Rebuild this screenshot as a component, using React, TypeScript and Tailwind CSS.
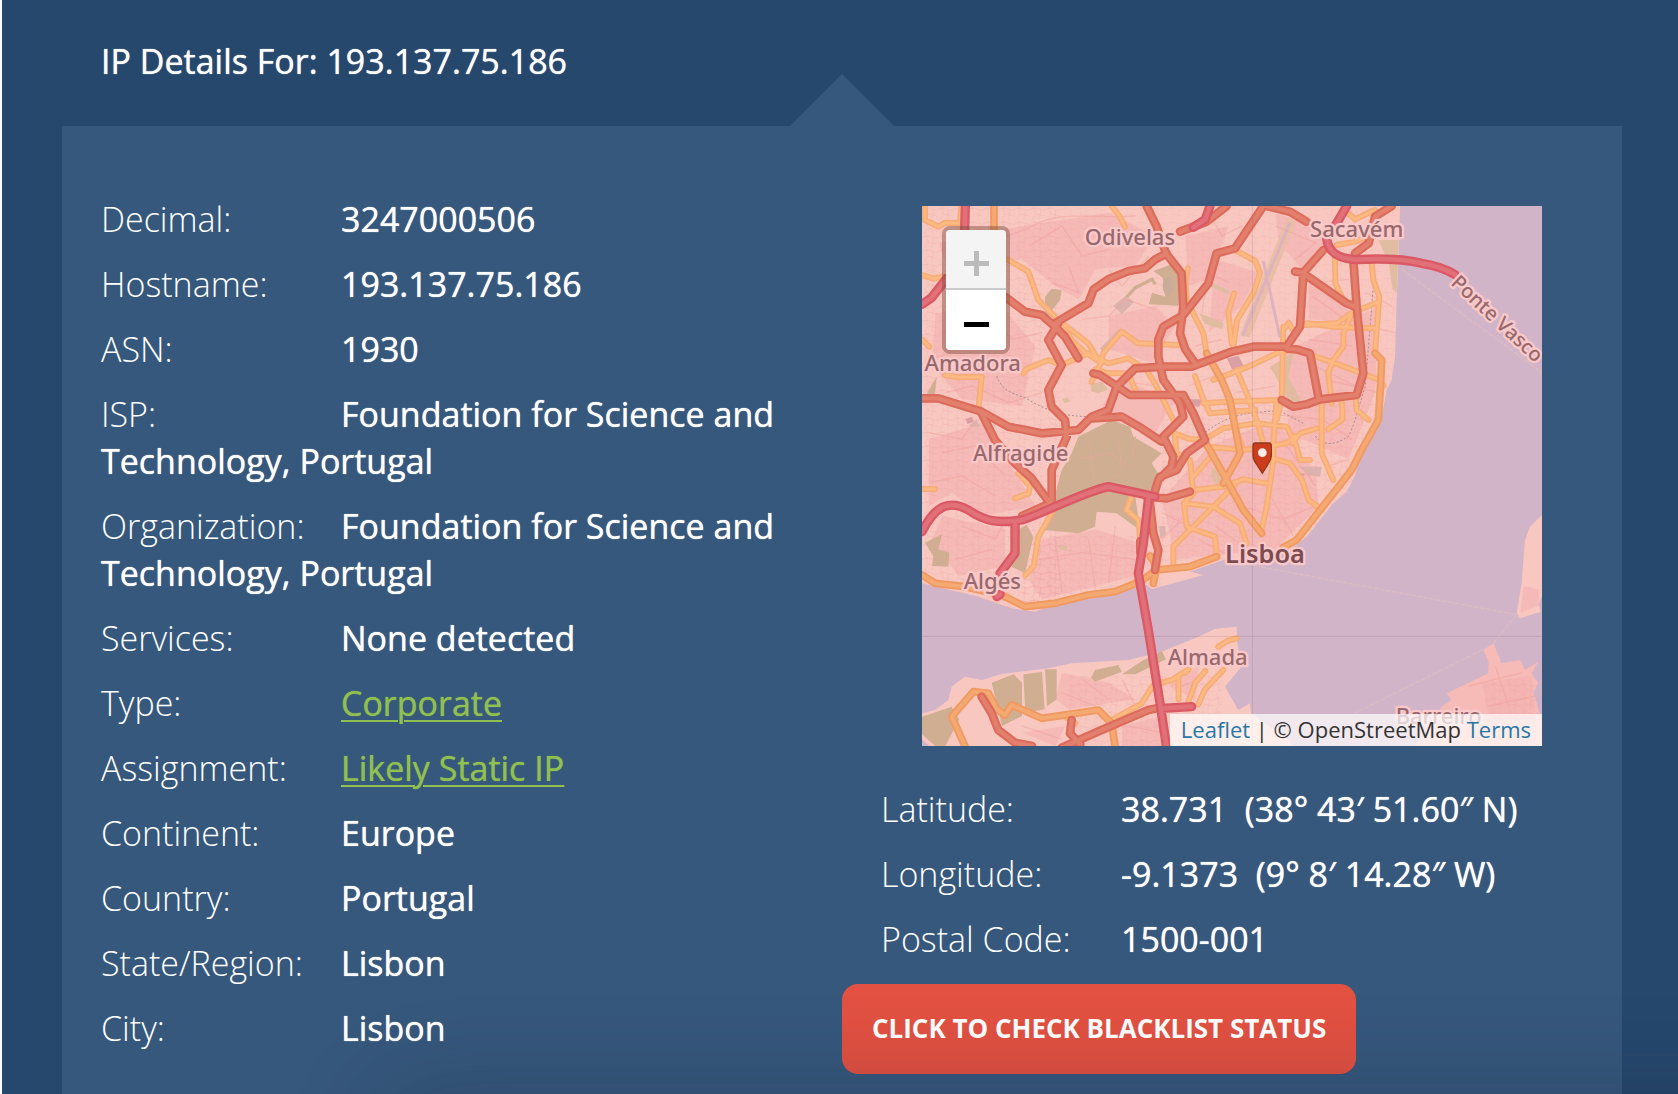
import React from "react";

type Detail = { label: string; value: string; href?: string };

const details: Detail[] = [
  { label: "Decimal:", value: "3247000506" },
  { label: "Hostname:", value: "193.137.75.186" },
  { label: "ASN:", value: "1930" },
  { label: "ISP:", value: "Foundation for Science and Technology, Portugal" },
  { label: "Organization:", value: "Foundation for Science and Technology, Portugal" },
  { label: "Services:", value: "None detected" },
  { label: "Type:", value: "Corporate", href: "#corporate" },
  { label: "Assignment:", value: "Likely Static IP", href: "#static-ip" },
  { label: "Continent:", value: "Europe" },
  { label: "Country:", value: "Portugal" },
  { label: "State/Region:", value: "Lisbon" },
  { label: "City:", value: "Lisbon" },
];

const location: Detail[] = [
  { label: "Latitude:", value: "38.731\u00a0 (38° 43′ 51.60″ N)" },
  { label: "Longitude:", value: "-9.1373\u00a0 (9° 8′ 14.28″ W)" },
  { label: "Postal Code:", value: "1500-001" },
];

function DetailList({ items }: { items: Detail[] }) {
  return (
    <dl>
      {items.map((item) => (
        <div key={item.label} className="pb-[18px]">
          <dt className="inline-block w-[240px] align-top font-light">{item.label}</dt>
          <dd className="inline font-medium [text-shadow:0_0_1px_currentColor]">
            {item.href ? (
              <a href={item.href} className="font-normal text-[#8fc050] underline decoration-2 underline-offset-4">
                {item.value}
              </a>
            ) : (
              item.value
            )}
          </dd>
        </div>
      ))}
    </dl>
  );
}

const woods = [
  "M469 692L569 642L624 662L634 692L719 742L689 772L714 812L689 852L640 872L654 972L584 922L524 917L519 962L469 982L369 972L389 902L419 792L449 742Z",
  "M290 970L314 957L334 992L309 1102L269 1082Z",
  "M9 1010L60 985L49 1030L82 1040L79 1082L30 1080L34 1050Z",
  "M369 272L389 248L419 252L414 282L369 340Z",
  "M694 195L750 175L782 230L778 300L680 295L690 260L730 272L722 215Z",
  "M209 1430L275 1405L300 1430L300 1530L240 1560Z",
  "M304 1405L360 1398L368 1510L310 1520Z",
  "M369 1390L404 1390L404 1480L375 1500Z",
  "M0 1532L89 1502L112 1540L70 1620L40 1620L0 1585Z",
  "M519 1392L589 1377L599 1397L519 1427L507 1415Z",
  "M600 1405L660 1365L719 1335L732 1360L640 1405Z",
  "M14 562L44 512L39 566Z",
];

const parks = [
  "M1044 482L1114 442L1099 512L1140 590L1110 600L1080 545Z",
  "M1369 102L1430 102L1424 262L1412 250L1400 170Z",
  "M830 320L905 350L900 370L850 355Z",
  "M850 222L925 255L915 264L855 236Z",
  "M868 790L900 770L908 820L884 836L866 812Z",
  "M505 532L540 528L560 550L530 562L508 556Z",
  "M420 580L436 574L444 586L428 592Z",
  "M410 1016L436 1020L430 1036L412 1030Z",
];

const greys = [
  "M574 300L610 270L636 288L600 324Z",
  "M1134 782L1200 782L1194 812L1160 808Z",
  "M534 427L590 370L598 378L545 440Z",
  "M140 660L165 640L172 664Z",
  "M710 960L730 960L732 985L716 998Z",
];

const minorStreets =
  "M60 130C160 90 240 110 330 60S520 40 640 30M320 120L420 60L480 150L560 130M440 180L470 260L390 230M560 190L600 240L680 150M60 380L200 320L270 400L360 380M30 460L140 420M70 560L150 540L260 590L360 560M480 340L560 330L610 280L700 310M560 520L700 540M20 680L120 700L160 640M60 740L160 720L240 800M20 830L120 810L220 870M120 960L220 1000L250 940M100 1060L210 1030M350 1060L480 1040L640 1060M400 1000L420 1160M500 1000L520 1150M580 960L560 1130M720 920L800 960M720 1000L780 940M830 1000L940 1060M880 960L990 1040M960 900L1080 940L1180 900M1040 860L1120 1000M1080 700L1180 840M1200 640L1290 700M1220 780L1280 760M1000 620L1200 640M940 560L1060 540M800 540L900 500M820 420L900 400M840 320L860 200L920 230M960 60L900 90L860 20M1060 60L1180 110L1120 160M1180 230L1280 220M1170 270L1270 340M1160 400L1290 420M1180 480L1300 540M1210 520L1370 560M1330 260L1410 300M1330 360L1420 380M480 1420L560 1480M420 1460L520 1500M600 1420L640 1500M620 1560L720 1580M300 1560L420 1600M780 1440L830 1420M850 1540L960 1580M1640 1440L1800 1400M1700 1500L1840 1470M1720 1380L1760 1500";

const orangeRoads = [
  "M9 0V42L49 62L70 50L114 52L119 0",
  "M0 207L35 218L62 212",
  "M259 162L319 197L349 282L409 342L499 412L534 472",
  "M409 345L452 405L490 440L539 470",
  "M569 0L592 30L609 62",
  "M304 502L312 490L379 462L419 477L499 442L559 472L619 457L654 480",
  "M509 527L534 477L545 440L599 377L649 412L769 417",
  "M520 490L560 502L619 502L640 552",
  "M69 507L110 514L179 512L170 602",
  "M0 400L22 422",
  "M674 492L704 542L754 642",
  "M819 510L840 570L864 622",
  "M798 187L790 222L794 282L844 382L854 442",
  "M939 132L1000 165L1014 202L994 262L945 342L934 422",
  "M936 262L919 320L929 412",
  "M874 522L980 482L1074 437L1124 432L1240 472L1374 522L1384 540",
  "M1154 352L1234 362L1359 367",
  "M1150 357L1245 352L1290 320L1370 288",
  "M1084 372L1100 350L1112 370M1084 362L1079 582L1064 642",
  "M944 492L974 562L1004 642L1022 705",
  "M844 592L914 587L1074 582",
  "M864 622L924 617L1000 612",
  "M1349 172L1354 222L1372 272L1359 442",
  "M1239 152L1240 232L1254 262L1270 290",
  "M1294 312L1264 382L1264 422L1234 462L1219 500L1229 592",
  "M1244 117L1299 107L1334 92L1350 50M1279 22L1299 40L1359 12",
  "M1300 570L1304 612L1339 642",
  "M1199 592L1199 742L1234 822",
  "M1260 590L1262 640L1219 670",
  "M1184 667L1134 682L1110 712",
  "M854 722L964 732L1094 712L1120 690",
  "M844 702L904 667L1004 652L1094 662L1124 722L1134 762L1164 762",
  "M1064 582L1054 712L1054 762L1034 902L1019 972",
  "M920 582L939 662L960 722",
  "M1054 757L1104 772L1140 822L1160 882L1199 912",
  "M814 852L904 842L964 820L1034 832",
  "M939 837L844 932L754 1022L754 1082",
  "M758 682L764 742L804 762L814 862L786 892L794 962L879 992L884 1052",
  "M786 892L874 902L954 952L974 1012",
  "M874 742L814 812M758 682L800 698L848 702",
  "M389 922L349 992L335 1080L310 1108",
  "M289 802L324 840L320 862L279 877",
  "M629 872L614 912L649 942L654 992",
  "M0 849L39 849",
  "M569 1542L659 1492L694 1437L749 1422L800 1390L790 1400",
  "M769 1410L770 1480M799 1487L820 1430L850 1395M829 1495L849 1450L904 1392",
  "M889 1322L915 1305L944 1297",
  "M430 1532L460 1552",
];

const strongOrangeRoads = [
  "M216 0V72",
  "M854 442L899 522L924 582L939 662L954 742L904 832",
  "M849 707L914 822L964 912L1019 982",
  "M0 1107L39 1132L129 1142L239 1167L309 1202L399 1192L499 1167L579 1157L654 1127L704 1092L804 1082L884 1052",
  "M694 1132L704 1082L684 1050",
  "M1359 442L1379 462L1376 532L1369 642L1319 732L1290 790L1234 862L1194 912L1124 1002L1084 1024",
  "M129 1620L89 1532L154 1457L199 1462L225 1510L249 1527L269 1497L359 1537L529 1512L569 1552L579 1620",
];

const trunkRoads = [
  "M249 272L309 317L359 327L399 362L429 392L469 457",
  "M399 352L499 292L515 250L559 220L620 195L669 187L700 160L734 142",
  "M674 0L704 62L732 142L779 202L784 302L774 382L790 430L819 472",
  "M1024 0L939 127L884 142L859 232L784 327L724 362L709 400L709 452L724 522L774 592L784 632L724 692L754 752L749 782L709 822L694 872",
  "M784 567L814 622L849 702L794 742L764 792L714 812",
  "M514 502L534 507L624 567L784 567",
  "M0 577L49 577L179 617L259 662L359 682L469 672L509 632L559 612L584 542L639 487L729 482L809 482L929 437L994 422L1094 422L1134 362L1144 202",
  "M509 637L599 632L659 667L719 707",
  "M409 352L379 402L419 477L379 552L389 602L429 642L434 692L389 792L389 882",
  "M179 622L219 702L279 772L329 817L384 892L300 930",
  "M1204 132L1144 200L1119 197M1144 202L1274 292L1299 302",
  "M1294 162L1304 302L1324 502L1304 567L1194 580L1154 595L1114 602L1079 582",
  "M1094 427L1124 430L1164 442L1189 572",
  "M1034 0L1104 17L1154 47M1409 0L1359 32L1340 112L1299 142",
  "M774 77L854 47L914 0",
  "M674 872L734 877L804 857",
  "M684 892L694 982L709 1032L699 1092M655 1005V1040",
  "M179 1472L209 1522L229 1572L279 1610L330 1620",
  "M419 1625L539 1572L679 1512L719 1504M449 1542L444 1582L475 1615",
];

const motorways = [
  "M0 977C39 900 79 880 139 912C189 947 229 952 299 942C369 920 479 860 559 842L699 872",
  "M680 872L664 1012L649 1102L679 1272L714 1492L734 1625",
  "M279 952V1042L234 1102M234 1165L225 1172",
  "M130 0L128 72M74 217L29 275L0 295",
  "M864 0L850 40L814 64",
  "M1274 0L1244 52L1214 97C1219 137 1244 157 1299 161C1369 157 1439 157 1499 172C1539 178 1569 187 1599 206",
  "M719 1507L809 1502",
];

const places = [
  { name: "Odivelas", x: 624, y: 117 },
  { name: "Sacavém", x: 1304, y: 92 },
  { name: "Amadora", x: 152, y: 494 },
  { name: "Alfragide", x: 296, y: 764 },
  { name: "Algés", x: 211, y: 1149 },
  { name: "Almada", x: 857, y: 1376 },
  { name: "Barreiro", x: 1550, y: 1554 },
];

function Roads({ paths, casing, fill, width }: { paths: string[]; casing: string; fill: string; width: number }) {
  const d = paths.join("");
  return (
    <g fill="none" strokeLinecap="round" strokeLinejoin="round">
      <path d={d} stroke={casing} strokeWidth={width} />
      <path d={d} stroke={fill} strokeWidth={width / 2} />
    </g>
  );
}

function LisbonMap() {
  return (
    <svg viewBox="0 0 1860 1620" className="block w-full" role="img" aria-label="Map of Lisbon">
      <defs>
        <pattern id="streets" width="46" height="42" patternUnits="userSpaceOnUse">
          <path d="M0 10L18 6L46 14M12 0L18 24L8 42M18 24L46 30M34 10L30 42" fill="none" stroke="#ee9ea2" strokeWidth="2" opacity="0.4" />
        </pattern>
        <clipPath id="land">
          <path d="M0 0H1434L1431 112L1424 282L1419 452L1409 522L1394 552L1379 632L1339 692L1304 782L1302 802L1274 857L1234 892L1154 992L1094 1040L904 1062L804 1097L844 1107L689 1150L674 1137L474 1185L379 1202L339 1217L269 1207L169 1172L0 1132Z" />
        </clipPath>
      </defs>
      <rect width="1860" height="1620" fill="#d2b4c8" />
      <g fill="#f8c8c0">
        <path d="M0 0H1434L1431 112L1424 282L1419 452L1409 522L1394 552L1379 632L1339 692L1304 782L1302 802L1274 857L1234 892L1154 992L1094 1040L904 1062L804 1097L844 1107L689 1150L674 1137L474 1185L379 1202L339 1217L269 1207L169 1172L0 1132Z" />
        <path d="M0 1522L39 1512L79 1482L89 1442L129 1412L179 1422L239 1404L379 1387L449 1372L619 1362L719 1337L829 1292L880 1268L944 1262L946 1310L960 1380L909 1442L949 1512L984 1492L987 1522L1100 1602L1110 1620H22L0 1600Z" />
        <path d="M1860 927L1824 962L1809 1002L1799 1132L1784 1222L1794 1237L1856 1217L1850 1195L1860 1170Z" />
      </g>
      <path
        d="M1684 1332L1714 1312L1739 1372L1794 1362L1809 1392L1849 1367L1829 1402L1849 1432L1834 1457L1844 1492L1860 1552V1620H1480L1559 1502L1589 1482L1574 1462L1699 1402L1700 1367Z"
        fill="#f6bbb6"
      />
      <g fill="#f4b0b0" opacity="0.6">
        <path d="M50 110L300 60L560 20L700 90L640 180L520 190L470 280L400 240L300 160L80 190Z" />
        <path d="M40 320L240 300L340 420L300 600L120 580L30 480Z" />
        <path d="M560 330L700 300L760 360L690 470L560 430Z" />
        <path d="M790 90L920 60L860 220L800 240Z" />
        <path d="M880 160L1010 200L960 300L860 380Z" />
        <path d="M590 520L760 580L700 680L540 600Z" />
        <path d="M20 700L180 650L280 800L340 900L180 930L90 860L20 900Z" />
        <path d="M60 930L250 970L250 1080L110 1110L30 1000Z" />
        <path d="M360 1000L520 970L650 1010L640 1110L360 1180L320 1120Z" />
        <path d="M720 880L860 720L1060 640L1180 800L1190 900L1060 1030L760 1060Z" />
        <path d="M1080 440L1370 300L1360 560L1280 760L1100 680Z" />
        <path d="M1060 20L1240 80L1140 190L1070 110Z" />
        <path d="M1160 220L1290 320L1280 350L1160 340Z" />
        <path d="M420 1400L560 1430L640 1480L440 1510L400 1480ZM740 1440L830 1380L820 1480ZM300 1580L430 1560L400 1620ZM600 1560L720 1530V1620H600Z" />
        <path d="M1680 1430L1830 1410L1840 1540L1700 1530ZM1805 1140L1850 1150L1850 1200L1795 1220Z" />
      </g>
      <g fill="#d9a0a4">
        <path d="M915 457L950 450L965 480L930 490ZM800 580L840 580L832 602L806 600ZM130 638L150 632L154 648L136 654ZM1130 800L1150 804L1140 814Z" />
      </g>
      <path d="M1109 40L968 390" stroke="#e9c0a6" strokeWidth="30" fill="none" />
      <path d="M1104 50L962 390M1024 165L1074 395" stroke="#deb2c0" strokeWidth="9" fill="none" />
      <path d={parks.join("")} fill="#e0bda0" />
      <path d={woods.join("")} fill="#cfae91" />
      <path d="M610 278L640 245L690 220L700 235" stroke="#cfae91" strokeWidth="10" fill="none" />
      <ellipse cx="738" cy="240" rx="16" ry="28" fill="#c7ad9a" />
      <path d={greys.join("")} fill="#dcb3ae" />
      <g clipPath="url(#land)">
        <rect width="420" height="1240" fill="url(#streets)" />
        <rect x="720" y="590" width="640" height="480" fill="url(#streets)" />
        <rect x="420" width="1010" height="590" fill="url(#streets)" opacity="0.6" />
        <rect x="300" y="990" width="420" height="220" fill="url(#streets)" />
      </g>
      <path d="M440 1410H900V1620H440ZM1690 1420H1850V1560H1690Z" fill="url(#streets)" />
      <path d="M470 760L560 740L640 790M500 700L520 850L460 880M590 700L600 800L520 850M640 690L630 760" fill="none" stroke="#e0ab9c" strokeWidth="3" />
      <path d={minorStreets} fill="none" stroke="#ef9f9c" strokeWidth="4" opacity="0.45" />
      <g fill="none" stroke="#a98f92" strokeWidth="3" strokeDasharray="6 6">
        <path d="M224 510C240 550 260 560 310 575C380 620 430 630 500 632M849 680C900 640 950 617 1074 615L1150 655M1180 690C1200 720 1240 720 1280 690C1300 650 1310 600 1330 540L1354 240" />
      </g>
      <g fill="none" stroke="#dbbcc2" strokeWidth="4" strokeDasharray="14 5">
        <path d="M1000 1080L1784 1226L1714 1312M1680 1332L1300 1520M1440 190L1860 500" />
      </g>
      <Roads paths={orangeRoads} casing="#f7ab76" fill="#fbb981" width={18} />
      <Roads paths={strongOrangeRoads} casing="#f09a62" fill="#f5a972" width={23} />
      <Roads paths={trunkRoads} casing="#dc6b5b" fill="#e3806d" width={26} />
      <Roads paths={motorways} casing="#db5965" fill="#e17078" width={28} />
      <path d="M991 0V1620M0 1291H1860" stroke="#7d5f76" strokeWidth="2" opacity="0.3" />
      <g
        fontFamily="'Noto Sans', 'Open Sans', sans-serif"
        fontSize="66"
        fontWeight="500"
        fill="#98686c"
        stroke="#f9c9ca"
        strokeWidth="14"
        strokeLinejoin="round"
        paintOrder="stroke"
        textAnchor="middle"
      >
        {places.map((place) => (
          <text key={place.name} x={place.x} y={place.y}>
            {place.name}
          </text>
        ))}
        <text x="1029" y="1071" fontSize="76" fontWeight="600" fill="#7c4c52">
          Lisboa
        </text>
        <text fontSize="60" textAnchor="start" transform="translate(1584 234) rotate(43)">
          Ponte Vasco
        </text>
      </g>
      <path
        d="M1000 711H1041Q1048 711 1048 719V750Q1046 764 1036 778L1021 802L1006 778Q994 764 993 750V719Q993 711 1000 711Z"
        fill="#cc3d1e"
        stroke="#8f3a1c"
        strokeWidth="4"
      />
      <circle cx="1021" cy="740" r="13" fill="#f7ece6" />
    </svg>
  );
}

export default function App() {
  return (
    <div className="relative flex min-h-screen flex-col overflow-hidden border-l-2 border-white bg-[#26486d] pr-[56px] pl-[60px] font-['Open_Sans',sans-serif] text-[34px] leading-[47px] text-white">
      <header className="relative px-[39px] pt-[38px] pb-[41px]">
        <h1 className="[text-shadow:0_0_1px_currentColor]">IP Details For: 193.137.75.186</h1>
        <svg viewBox="0 0 104 52" className="absolute bottom-0 left-1/2 w-[104px] -translate-x-1/2" aria-hidden="true">
          <path d="M0 52L52 0L104 52Z" fill="#36587c" />
        </svg>
      </header>

      <main className="grid flex-1 grid-cols-2 bg-[#36587c] pt-[70px]">
        <section className="pl-[39px]">
          <DetailList items={details} />
        </section>

        <section className="pt-[10px]">
          <div className="relative mx-20">
            <LisbonMap />
            <div className="absolute top-5 left-5 flex flex-col overflow-hidden rounded-lg border-4 border-[#7d4b3c]/45">
              <button
                type="button"
                aria-label="Zoom in"
                disabled
                className="flex h-[60px] w-[60px] items-center justify-center border-b-2 border-[#ccc] bg-[#f4f4f4] pt-2"
              >
                <svg viewBox="0 0 25 25" className="w-[25px]" stroke="#bbb" strokeWidth="5">
                  <path d="M12.5 0V25M0 12.5H25" />
                </svg>
              </button>
              <button
                type="button"
                aria-label="Zoom out"
                className="flex h-[60px] w-[60px] items-center justify-center bg-white pt-2"
              >
                <svg viewBox="0 0 25 25" className="w-[25px]" stroke="#000" strokeWidth="5">
                  <path d="M0 12.5H25" />
                </svg>
              </button>
            </div>
            <div className="absolute right-0 bottom-0 bg-white/70 px-[11px] pb-[2px] text-[22px] leading-[30px] text-[#333]">
              <a href="#leaflet" className="text-[#2878a8]">Leaflet</a> | © OpenStreetMap{" "}
              <a href="#terms" className="text-[#2878a8]">Terms</a>
            </div>
          </div>

          <div className="pt-10 pl-[39px]">
            <DetailList items={location} />
          </div>
          <button
            type="button"
            className="mt-[3px] h-[90px] rounded-2xl bg-[#e25141] px-[30px] pb-[2px] text-[26px] font-bold"
          >
            CLICK TO CHECK BLACKLIST STATUS
          </button>
        </section>
      </main>

      <div
        aria-hidden="true"
        className="pointer-events-none absolute top-full -right-40 left-[380px] h-24 rounded-full shadow-[0_0_90px_10px_rgba(20,25,50,0.2)]"
      />
    </div>
  );
}
